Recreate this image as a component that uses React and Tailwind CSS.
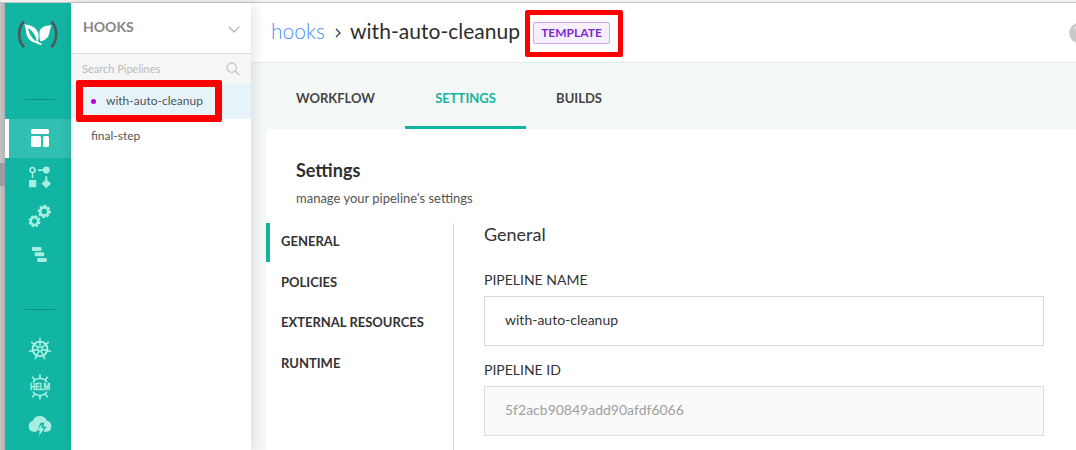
import React from "react";

const range = (n) => Array.from({ length: n }, (_, i) => i);

function Logo() {
  return (
    <svg width="44" height="28" viewBox="0 0 44 28" fill="none">
      <path d="M7.900 1.400C1.500 8.600 1.500 20 7.900 27.200" stroke="#50575b" strokeWidth="2.700" />
      <path d="M35.400 1.400c6.400 7.200 6.400 18.600 0 25.800" stroke="#50575b" strokeWidth="2.700" />
      <path d="M8.200 4.300c7.500.8 13.300 4 14.300 10 .4 3.500-.2 6-1 8.700C14 22.500 10.500 17.500 10 11.500 9.800 8.500 9.200 6.300 8.200 4.300z" fill="#fff" />
      <path d="M12 8c4.800 3.200 7.800 7.500 9 14-4.900-3.300-8-7.800-9-14z" fill="#12b5a3" />
      <path d="M35.800 5.200c-7 .3-12.700 2-12.300 8.300 0 3 .2 5.500.6 7.700 4.700-.5 8.200-3.200 9.200-7.700.6-3 .8-6 2.500-8.300z" fill="#fff" />
      <path d="M19.500 21.500c1.800 1.400 3.500 2.200 6 2.800" stroke="#fff" strokeWidth="1.800" />
    </svg>
  );
}

function BoardIcon() {
  return (
    <svg width="20" height="20" viewBox="0 0 20 20" fill="#fff">
      <rect x="1" y="1" width="18" height="5" rx="1.600" />
      <rect x="1" y="8" width="10" height="11" rx="1.600" />
      <rect x="13" y="8" width="6" height="11" rx="1.600" />
    </svg>
  );
}

function FlowIcon() {
  return (
    <svg width="24" height="24" viewBox="0 0 24 24" fill="#a9eee3">
      <circle cx="4.500" cy="5" r="2.500" fill="none" stroke="#a9eee3" strokeWidth="1.700" />
      <path d="M3.800 7.500h1.400v5.500H3.800zM10 4.300h5.500v1.600H10z" />
      <circle cx="18.300" cy="5" r="3.400" />
      <rect x="1" y="15" width="7.200" height="7.200" rx=".7" />
      <path d="M17.500 11.500h1.600v3.500l3.800 3.700-3.200 2.800-1.400 1.700-1.400-1.700-3.200-2.800 3.800-3.700z" stroke="#a9eee3" strokeWidth=".3" />
    </svg>
  );
}

function Gear({ cx, cy, turn }) {
  return (
    <g transform={`translate(${cx} ${cy}) rotate(${turn})`}>
      <circle r="4" fill="none" stroke="#a9eee3" strokeWidth="2.500" />
      {range(8).map((i) => (
        <rect key={i} x="-1.400" y="-6.500" width="2.800" height="2.200" fill="#a9eee3" transform={`rotate(${i * 45})`} />
      ))}
    </g>
  );
}

function GearsIcon() {
  return (
    <svg width="24" height="24" viewBox="0 0 24 24">
      <Gear cx={16.300} cy={7.500} turn={8} />
      <g transform="translate(6.500 17.200) scale(.92)">
        <Gear cx={0} cy={0} turn={20} />
      </g>
    </svg>
  );
}

function StepsIcon() {
  return (
    <svg width="16" height="16" viewBox="0 0 16 16" fill="#a9eee3">
      <rect x="1" y="0" width="9.500" height="4" rx="1.200" />
      <rect x="3.700" y="5.300" width="9.500" height="4" rx="1.200" />
      <rect x="6.300" y="11" width="9.500" height="4" rx="1.200" />
    </svg>
  );
}

function WheelIcon() {
  return (
    <svg width="24" height="24" viewBox="0 0 24 24" fill="none" stroke="#a9eee3">
      <circle cx="12" cy="12" r="7.400" strokeWidth="1.900" />
      <circle cx="12" cy="12" r="2.100" strokeWidth="1.400" />
      {range(7).map((i) => (
        <path key={i} d="M12 9.800V.7" strokeWidth="1.500" transform={`rotate(${(i * 360) / 7} 12 12)`} />
      ))}
    </svg>
  );
}

function HelmIcon() {
  return (
    <svg width="24" height="26" viewBox="0 0 24 26" fill="none" stroke="#a9eee3" strokeWidth="1.500">
      <path d="M4.800 8.400a8.700 8.700 0 0 1 14.400 0M4.800 17.600a8.700 8.700 0 0 0 14.400 0" />
      <path d="M12 .4v4.300M12 21.300v4.300M4.300 2.800l2.800 3.500M19.700 2.800l-2.800 3.500M4.300 23.200l2.800-3.500M19.700 23.200l-2.800-3.500" strokeWidth="1.700" />
      <text x="2" y="16" textLength="20" lengthAdjust="spacingAndGlyphs" stroke="#a9eee3" strokeWidth=".3" fill="#a9eee3" fontFamily="Roboto" fontWeight="700" fontSize="8.400">HELM</text>
    </svg>
  );
}

function CloudIcon() {
  return (
    <svg width="24" height="22" viewBox="0 0 24 22">
      <path d="M5.500 16.800A5.500 5.500 0 0 1 4.600 6.100 7.700 7.700 0 0 1 19 5.800 5.600 5.600 0 0 1 18.500 16.800z" fill="#a9eee3" />
      <path d="M12.700 7.700h3.500l-.6 4h3.200L13.700 19H7.200z" fill="#12b5a3" />
      <path d="M14.200 9L8.800 15.500h3.100l-.9 5.300 5.400-7.600h-3.100z" fill="#a9eee3" />
    </svg>
  );
}

function Rail() {
  const item = "flex h-[39px] shrink-0 items-center justify-center pl-1 pb-[2px]";
  return (
    <nav className="flex w-[66px] shrink-0 flex-col bg-[#12b5a3] pt-[17px]">
      <div className="flex h-[79px] justify-center"><Logo /></div>
      <div className="ml-5 h-px w-[30px] shrink-0 bg-[#0c8f81]" />
      <div className="mt-[19px] flex h-[39px] shrink-0 items-center justify-center border-l-4 border-white bg-[#30bfb0] pb-[2px]"><BoardIcon /></div>
      <div className={item}><FlowIcon /></div>
      <div className={item}><GearsIcon /></div>
      <div className="flex h-[39px] shrink-0 items-center justify-center pl-[2px] pb-px"><StepsIcon /></div>
      <div className="mt-[34px] ml-5 h-px w-[30px] shrink-0 bg-[#0c8f81]" />
      <div className="mt-[19px] flex h-[39px] shrink-0 items-center justify-center pl-1"><WheelIcon /></div>
      <div className="flex h-[39px] shrink-0 items-center justify-center pl-1 pb-px"><HelmIcon /></div>
      <div className="flex h-[39px] shrink-0 items-center justify-center pl-1 pb-px"><CloudIcon /></div>
    </nav>
  );
}

function PipelineList() {
  return (
    <aside className="z-10 flex w-[180px] shrink-0 flex-col bg-white shadow-[2px_0_14px_rgba(0,0,0,0.12)]">
      <div className="flex h-[51px] items-center justify-between border-b border-[#dcdcdc] pr-[11px] pl-3">
        <span className="mb-[2px] text-[14px] leading-5 font-bold text-[#858585]">HOOKS</span>
        <svg width="12" height="7" viewBox="0 0 12 7" fill="none" stroke="#b8b8b8" strokeWidth="1.400" className="mt-[2px]"><path d="M.7.700l5.300 5.300 5.300-5.300" /></svg>
      </div>
      <div className="flex h-[30px] items-center justify-between bg-[#f6f6f6] pr-[11px] pl-[11px] text-[11px] text-[#b9bcbe]">
        <span>Search Pipelines</span>
        <svg width="14" height="14" viewBox="0 0 14 14" fill="none" stroke="#bfc1c2" strokeWidth="1.100"><circle cx="5.700" cy="5.600" r="4.700" /><path d="M9.200 9l4.100 3.900" /></svg>
      </div>
      <div className="relative flex h-[35px] items-center bg-[#e6f4f9] pl-[20px] text-[12px] text-[#4f5558]">
        <span className="mr-[10px] size-[5px] rounded-full bg-[#b300dd]" />
        <span className="mb-[2px]">with-auto-cleanup</span>
        <div className="absolute -top-1 left-[5px] h-[42px] w-[146px] rounded-[2px] border-[7px] border-[#ff0000]" />
      </div>
      <div className="flex h-[34px] items-center pl-[20px] text-[12px] text-[#555]">final-step</div>
    </aside>
  );
}

function Header() {
  return (
    <header className="flex h-[60px] shrink-0 items-center overflow-hidden border-b border-[#e6eae9] bg-white pl-5">
      <span className="mb-[3px] w-[62px] text-[21px] leading-7 font-light text-[#4a90f5]">hooks</span>
      <svg width="7" height="10" viewBox="0 0 7 10" fill="none" stroke="#444" strokeWidth="1.400" className="ml-[2px]"><path d="M1 1l4 4-4 4" /></svg>
      <span className="mb-[3px] ml-2 w-[183px] whitespace-nowrap text-[21px] leading-7 tracking-[0.03px] text-[#2d2d2d]">with-auto-cleanup</span>
      <div className="relative flex h-[22px] w-[77px] items-center justify-center rounded-[2px] border border-[#cfa5f0] bg-[#f8effe] text-[12px] font-bold text-[#7a2bd0]">
        TEMPLATE
        <div className="absolute -top-[13px] -left-[9px] h-[47px] w-[98px] rounded-[2px] border-5 border-[#ff0000]" />
      </div>
      <svg width="7" height="22" viewBox="0 0 7 22" className="ml-auto">
        <circle cx="10.500" cy="11" r="10.300" fill="#c9c9c9" />
        <path d="M6 6.200l1-.8" stroke="#fff" strokeWidth="1.500" />
      </svg>
    </header>
  );
}

function Tabs() {
  const tab = "flex h-[66px] items-center justify-center pt-[5px]";
  return (
    <div className="flex h-[66px] shrink-0 bg-[#f4f8f7] pl-[15px] text-[13px] font-bold text-[#454545]">
      <div className={tab + " w-[139px]"}>WORKFLOW</div>
      <div className="flex h-[66px] w-[121px] items-center justify-center border-b-3 border-[#12b5a3] pt-[8px] text-[#12b5a3]">SETTINGS</div>
      <div className={tab + " w-[106px]"}>BUILDS</div>
    </div>
  );
}

function SettingsNav() {
  const link = "flex items-center pl-[15px]";
  return (
    <div className="w-[188px] shrink-0 border-r border-[#d8d8d8] text-[13px] font-bold text-[#333]">
      <div className="flex h-[39px] items-center border-l-4 border-[#12b5a3] pb-[2px] pl-[11px]">GENERAL</div>
      <div className={link + " h-[41px]"}>POLICIES</div>
      <div className={link + " h-[39px]"}>EXTERNAL RESOURCES</div>
      <div className={link + " h-[43px]"}>RUNTIME</div>
    </div>
  );
}

function Settings() {
  return (
    <main className="ml-[15px] flex min-h-0 flex-1 flex-col bg-white">
      <div className="h-[94px] shrink-0 pt-[29px] pl-[30px]">
        <h1 className="text-[18px] leading-6 font-bold text-[#2e2e2e]">Settings</h1>
        <p className="mt-[6px] text-[13px] leading-5 text-[#555]">manage your pipeline's settings</p>
      </div>
      <div className="flex min-h-0 flex-1">
        <SettingsNav />
        <section className="w-[590px] pl-[30px] text-[#333]">
          <h2 className="h-[44px] text-[18px] leading-[22px]">General</h2>
          <div className="h-[29px] text-[14px] leading-[26px]">PIPELINE NAME</div>
          <div className="flex h-[50px] w-[560px] items-center border border-[#d9d9d9] pb-[3px] pl-5 text-[14px]">with-auto-cleanup</div>
          <div className="mt-[11px] h-[29px] text-[14px] leading-[26px]">PIPELINE ID</div>
          <div className="flex h-[50px] w-[560px] items-center border border-[#dedede] bg-[#fafafa] pb-[3px] pl-5 text-[14px] text-[#a0a0a0]">5f2acb90849add90afdf6066</div>
        </section>
      </div>
    </main>
  );
}

export default function App() {
  return (
    <div className="flex h-[450px] w-[1076px] flex-col overflow-hidden bg-white font-['Lato',sans-serif]">
      <div className="h-[3px] shrink-0 border-b border-[#c6c3c0] bg-[#f2f1f0]" />
      <div className="flex min-h-0 flex-1">
        <div className="w-[5px] shrink-0 bg-linear-to-r from-[#c4c4c6] to-[#b2b2b5] pt-[160px]">
          <div className="h-[23px] bg-[#9b9ca2]" />
        </div>
        <Rail />
        <PipelineList />
        <div className="flex min-w-0 flex-1 flex-col bg-[#f4f8f7]">
          <Header />
          <Tabs />
          <Settings />
        </div>
      </div>
    </div>
  );
}
